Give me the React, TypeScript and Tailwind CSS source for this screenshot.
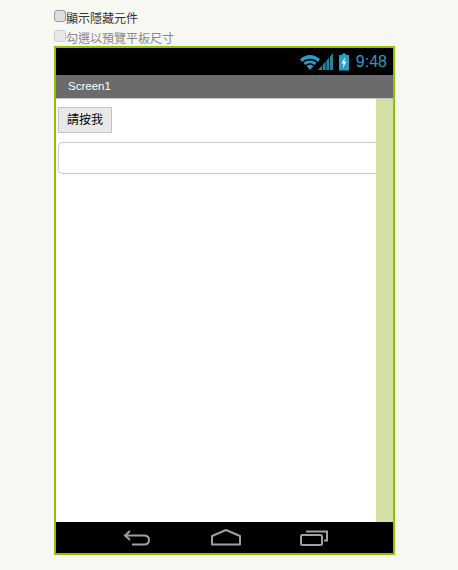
import React from 'react';

const cjk = 'font-["Liberation_Sans","Noto_Sans_CJK_TC",sans-serif]';

const StatusIcons = () => (
  <svg width="50" height="20" viewBox="0 0 50 20" className="shrink-0">
    {/* wifi */}
    <path d="M0 7.5 C5 1.5 15 1.5 20 7.5 L17.8 10 C13.5 5.8 6.5 5.8 2.2 10 Z" fill="#2d9cc4" />
    <path d="M3.6 11 C7 7.8 13 7.8 16.4 11 L14.6 13 C12 10.8 8 10.8 5.4 13 Z" fill="#2d9cc4" />
    <path d="M6.6 14 C8.6 12.4 11.4 12.4 13.4 14 L10 18 Z" fill="#2d9cc4" />
    {/* signal */}
    <path d="M18 18 L22 18 L22 13.5 Z" fill="#2a83a3" />
    <path d="M22.8 18 L25.6 18 L25.6 9.5 L22.8 12.8 Z" fill="#2a83a3" />
    <path d="M26.4 18 L29 18 L29 5.8 L26.4 8.8 Z" fill="#2a83a3" />
    <path d="M29.8 18 L33 18 L33 1 L29.8 5 Z" fill="#2a83a3" />
    {/* battery */}
    <path d="M42 3 L42 1.5 L46 1.5 L46 3 L49 3 L49 18.5 L39 18.5 L39 3 Z" fill="#2d9cc4" />
    <path d="M45 5 L41.5 11.5 L43.6 11.5 L42.8 16.5 L46.5 9.5 L44.3 9.5 Z" fill="#e8f6fb" />
  </svg>
);

const BackIcon = () => (
  <svg width="28" height="18" viewBox="0 0 28 18" fill="none" stroke="#a0a0a0" strokeWidth="2">
    <path d="M7 2 L2 6.5 L7 11" />
    <path d="M2 6.5 H21 C24.5 6.5 26 8.5 26 11 C26 13.5 24.5 15.5 21 15.5 H9" />
  </svg>
);

const HomeIcon = () => (
  <svg width="30" height="17" viewBox="0 0 30 17" fill="none" stroke="#a0a0a0" strokeWidth="2">
    <path d="M1 7 L15 1 L29 7 V15.5 H1 Z" strokeLinejoin="round" />
  </svg>
);

const RecentIcon = () => (
  <svg width="28" height="16" viewBox="0 0 28 16" fill="none" stroke="#a0a0a0" strokeWidth="2">
    <rect x="1" y="5" width="21" height="10" rx="1.5" />
    <path d="M6 1.5 H27 V10.5 H24" />
  </svg>
);

const Row = ({ label, dim }: { label: string; dim?: boolean }) => (
  <label className={`flex h-[20px] items-start text-[12px] leading-[18px] ${dim ? 'text-[#888888]' : 'text-[#333333]'}`}>
    <span className={`h-[12px] w-[12px] shrink-0 rounded-[3px] border ${dim ? 'border-[#cccccc] bg-[#e8e8e8]' : 'border-[#999999] bg-[#dedede]'}`} />
    <span>{label}</span>
  </label>
);

export default function App() {
  return (
    <div className={`h-[570px] w-[458px] overflow-hidden bg-[#f8f8f3] pt-[10px] pl-[54px] ${cjk}`}>
      <div className="h-[36px]">
        <Row label="顯示隱藏元件" />
        <Row label="勾選以預覽平板尺寸" dim />
      </div>

      <div className="relative flex h-[509px] w-[341px] flex-col border-2 border-[#8fc202] bg-white">
        <div className="flex h-[27px] shrink-0 items-center justify-end gap-[6px] bg-black pr-[6px]">
          <StatusIcons />
          <span className="text-[16px] leading-none text-[#2d9cc4]">9:48</span>
        </div>
        <div className="flex h-[24px] shrink-0 items-center border-b border-[#c4c4c4] bg-[#6b6b6b] pl-[12px] text-[11.5px] text-white">
          Screen1
        </div>
        <div className="flex min-h-0 flex-1">
          <div className="flex-1 pt-[8px] pl-[2px]">
            <button className="block h-[26px] w-[54px] border border-[#c4c4c4] bg-[#e9e9e9] text-[12px] text-black">
              請按我
            </button>
            <div className="mt-[9px] h-[32px] rounded-l-[5px] border border-r-0 border-[#c8c8c8] bg-white" />
          </div>
          <div className="w-[17px] shrink-0 bg-[#d3e0a3]" />
        </div>
        <div className="flex h-[31px] shrink-0 items-center justify-between bg-black pr-[65px] pl-[67px]">
          <BackIcon />
          <HomeIcon />
          <RecentIcon />
        </div>
      </div>
    </div>
  );
}
